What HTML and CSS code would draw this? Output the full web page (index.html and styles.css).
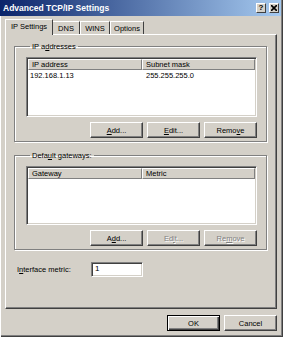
FILE: index.html
```html
<!DOCTYPE html>
<html lang="en">
<head>
    <meta charset="UTF-8">
    <title>Advanced TCP/IP Settings</title>
    <link rel="stylesheet" href="styles.css">
</head>
<body>
    <div class="window">
        <div class="titlebar">
            <span class="title">Advanced TCP/IP Settings</span>
            <div class="caption-buttons">
                <span class="cap-btn help">?</span>
                <span class="cap-btn">
                    <svg width="6" height="6" viewBox="0 0 6 6"><path d="M0 0L6 6M6 0L0 6" stroke="#000" stroke-width="1.6"/></svg>
                </span>
            </div>
        </div>

        <div class="client">
            <div class="tabs">
                <div class="tab active">IP Settings</div>
                <div class="tab dns">DNS</div>
                <div class="tab wins">WINS</div>
                <div class="tab options">Options</div>
            </div>

            <div class="panel">
                <fieldset class="group">
                    <legend>IP a<u>d</u>dresses</legend>
                    <div class="listview">
                        <div class="lv-header">
                            <div class="col c1">IP address</div>
                            <div class="col c2">Subnet mask</div>
                        </div>
                        <div class="lv-row">
                            <span class="c1">192.168.1.13</span>
                            <span class="c2">255.255.255.0</span>
                        </div>
                    </div>
                    <div class="btn-row">
                        <button class="btn"><u>A</u>dd...</button>
                        <button class="btn"><u>E</u>dit...</button>
                        <button class="btn">Remo<u>v</u>e</button>
                    </div>
                </fieldset>

                <fieldset class="group second">
                    <legend>Defa<u>u</u>lt gateways:</legend>
                    <div class="listview short">
                        <div class="lv-header">
                            <div class="col c1">Gateway</div>
                            <div class="col c2">Metric</div>
                        </div>
                    </div>
                    <div class="btn-row">
                        <button class="btn">A<u>d</u>d...</button>
                        <button class="btn" disabled>Ed<u>i</u>t...</button>
                        <button class="btn" disabled>Re<u>m</u>ove</button>
                    </div>
                </fieldset>

                <div class="metric-row">
                    <label>I<u>n</u>terface metric:</label>
                    <div class="textbox">1</div>
                </div>
            </div>

            <div class="dialog-buttons">
                <button class="btn default">OK</button>
                <button class="btn">Cancel</button>
            </div>
        </div>
    </div>
</body>
</html>
```

FILE: styles.css
```css
/* page */
body {
    margin: 0;
    font-family: "Liberation Sans", Arial, sans-serif;
    font-size: 7.5px;
    color: #000;
    background: #d4d0c8;
}

u { text-decoration: underline; }

/* window frame */
.window {
    width: 283px;
    height: 337px;
    box-sizing: border-box;
    background: #d4d0c8;
    box-shadow: inset 1px 0 #fff, inset -1px -1px #404040, inset -2px -2px #808080;
    display: flex;
    flex-direction: column;
}

/* title bar */
.titlebar {
    height: 16px;
    margin-right: 2px;
    background: linear-gradient(to right, #0a246a, #a6caf0);
    display: flex;
    align-items: center;
    justify-content: space-between;
    padding-left: 3px;
}
.title {
    color: #fff;
    font-weight: bold;
    font-size: 8.5px;
}
.caption-buttons { display: flex; gap: 3px; padding-right: 2px; }
.cap-btn {
    width: 10px;
    height: 10px;
    box-sizing: border-box;
    background: #d4d0c8;
    border: 1px solid;
    border-color: #fff #404040 #404040 #fff;
    display: flex;
    align-items: center;
    justify-content: center;
}
.cap-btn.help { font-weight: bold; font-size: 8px; line-height: 1; }

/* dialog body */
.client {
    flex: 1;
    padding: 3px 6px 0 5px;
    display: flex;
    flex-direction: column;
}

/* tabs */
.tabs { display: flex; height: 15px; align-items: flex-end; padding-left: 2px; }
.tab {
    height: 13px;
    box-sizing: border-box;
    border: 1px solid;
    border-color: #fff #404040 transparent #fff;
    border-bottom: none;
    display: flex;
    align-items: center;
    justify-content: center;
}
.tab.dns { width: 28px; }
.tab.wins { width: 30px; }
.tab.options { width: 34px; }
.tab.active {
    width: 48px;
    height: 16px;
    margin: 0 -1px -1px -2px;
    padding-bottom: 2px;
    background: #d4d0c8;
    position: relative;
    z-index: 1;
}

.panel {
    height: 275px;
    box-sizing: border-box;
    border: 1px solid;
    border-color: #fff #404040 #404040 #fff;
    box-shadow: inset -1px -1px #808080;
    padding: 7px 9px 0 8px;
}

/* group boxes */
.group {
    margin: 0;
    padding: 6px 9px 3px 11px;
    border: 1px solid #808080;
    box-shadow: inset 1px 1px #fff, 1px 1px #fff;
}
.group legend { padding: 0 2px; margin-left: 4px; }
.group.second { margin-top: 9px; }

/* list view */
.listview {
    height: 60px;
    box-sizing: border-box;
    background: #fff;
    border: 1px solid;
    border-color: #808080 #fff #fff #808080;
    box-shadow: inset 1px 1px #404040, inset -1px -1px #d4d0c8;
    padding: 1px;
}
.listview.short { height: 59px; }
.lv-header { display: flex; height: 11px; }
.lv-header .col {
    box-sizing: border-box;
    background: #d4d0c8;
    border: 1px solid;
    border-color: #fff #808080 #808080 #fff;
    padding-left: 3px;
    line-height: 9px;
}
.lv-header .c1 { width: 114px; }
.lv-header .c2 { flex: 1; }
.lv-row { display: flex; padding-top: 1px; }
.lv-row .c1 { width: 114px; padding-left: 2px; }
.lv-row .c2 { padding-left: 2px; }

/* buttons */
.btn-row {
    display: flex;
    justify-content: flex-end;
    gap: 4px;
    margin-top: 5px;
}
.btn {
    width: 53px;
    height: 16px;
    box-sizing: border-box;
    padding: 0;
    font: inherit;
    color: #000;
    background: #d4d0c8;
    border: 1px solid;
    border-color: #fff #404040 #404040 #fff;
    box-shadow: inset -1px -1px #808080;
}
.btn:disabled { color: #808080; text-shadow: 1px 1px #fff; }
.btn.default {
    border: 1px solid #000;
    box-shadow: inset 1px 1px #fff, inset -1px -1px #404040, inset -2px -2px #808080;
}

/* interface metric */
.metric-row {
    display: flex;
    align-items: center;
    margin-top: 12px;
    padding-left: 3px;
}
.metric-row label { width: 74px; }
.textbox {
    width: 52px;
    height: 15px;
    box-sizing: border-box;
    background: #fff;
    border: 1px solid;
    border-color: #808080 #fff #fff #808080;
    box-shadow: inset 1px 1px #404040, inset -1px -1px #d4d0c8;
    padding: 1px 3px;
    font-size: 8px;
}

.dialog-buttons {
    display: flex;
    justify-content: flex-end;
    gap: 4px;
    margin-top: 6px;
}
```
